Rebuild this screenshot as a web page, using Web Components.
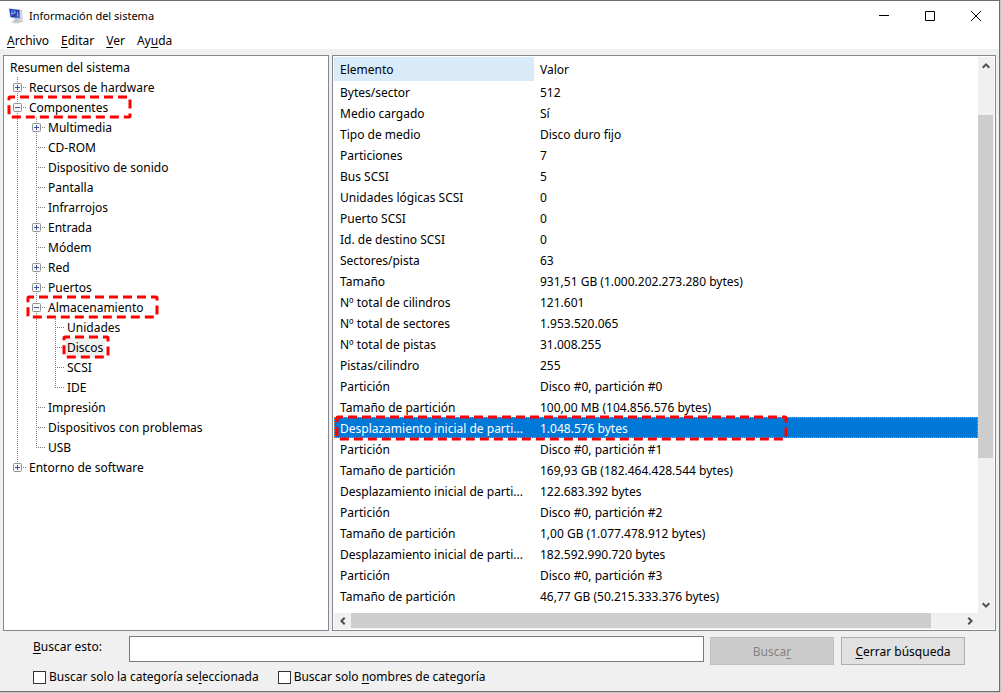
<!DOCTYPE html>
<html lang="es">
<head>
<meta charset="utf-8">
<title>Información del sistema</title>
<style>
html, body { height: 100%; margin: 0; }
body {
  box-sizing: border-box;
  padding: 0 1px 1px 0;
  background: #c6c6c6;
  font: 12px/20px "Noto Sans", "Open Sans", sans-serif;
  color: #000;
}
</style>
</head>
<body>
<system-info></system-info>

<template id="t-system-info">
  <style>
    :host { display: flex; flex-direction: column; box-sizing: border-box; height: 100%; background: #f0f0f0; border: solid #6e6e6e; border-width: 1px 1px 1px 0; }
    main { flex: 1; min-height: 0; display: grid; grid-template-columns: minmax(0, 326fr) minmax(0, 664fr); grid-template-rows: minmax(0, 1fr); gap: 3px; padding: 6px 3px 0; }
    .tree, detail-list { border: 1px solid #828790; background: #fff; min-height: 0; }
    .tree { padding: 1px 0 0 4px; overflow: hidden; }
  </style>
  <title-bar>Información del sistema</title-bar>
  <menu-bar></menu-bar>
  <main>
    <div class="tree" role="tree">
      <tree-item root label="Resumen del sistema">
        <tree-item label="Recursos de hardware" state="closed"></tree-item>
        <tree-item label="Componentes" state="open" mark style="--mark-width:125px"></tree-item>
        <tree-item label="Entorno de software" state="closed" last></tree-item>
      </tree-item>
    </div>
    <detail-list></detail-list>
  </main>
  <find-bar></find-bar>
</template>

<template id="t-title-bar">
  <style>
    :host { display: flex; align-items: center; height: 30px; background: #fff; padding-left: 8px; font-size: 11px; }
    .logo { width: 16px; height: 16px; margin-right: 5px; }
    .name { flex: 1; }
    button { width: 46px; height: 30px; padding: 0; border: 0; background: none; display: grid; place-items: center; }
  </style>
  <svg class="logo" viewBox="0 0 16 16">
    <defs><linearGradient id="g" x1="0" y1="0" x2="1" y2="1"><stop offset="0" stop-color="#1f45c8"/><stop offset=".55" stop-color="#2038a4"/><stop offset="1" stop-color="#6f9be6"/></linearGradient></defs>
    <ellipse cx="8.500" cy="13.700" rx="4.800" ry="1.800" fill="#d4d7dc"/>
    <path d="M6.500 10l4 1v3h-4z" fill="#b9bec8"/>
    <path d="M11.500 1.500l2.300.7.6 11.800-2.600-.8z" fill="#dcdfe6" stroke="#a9aebb" stroke-width=".5"/>
    <path d="M.6 0L12 1.400l.8 10L2 9.700z" fill="#cfd6e8"/>
    <path d="M1.200.7l10.300 1.200.7 8.900L2.600 9.100z" fill="url(#g)"/>
    <path d="M4 2.500v5M6 2.500l.5 3.500 1-3M9.300 3.500l.5 4.500M3 5.500h3" stroke="#8fb2f2" stroke-width=".9" fill="none"/>
  </svg>
  <span class="name"><slot></slot></span>
  <button aria-label="Minimizar"><svg width="10" height="10"><path d="M0 4.500h10" stroke="#000"/></svg></button>
  <button aria-label="Maximizar"><svg width="10" height="10"><path d="M.5.5h9v9h-9z" fill="none" stroke="#000"/></svg></button>
  <button aria-label="Cerrar"><svg width="10" height="10"><path d="M0 0l10 10M10 0L0 10" stroke="#000"/></svg></button>
</template>

<template id="t-menu-bar">
  <style>
    :host { display: flex; gap: 12px; background: #fff; padding: 0 7px; height: 18px; }
    button { font: inherit; line-height: 20px; border: 0; padding: 0; background: none; color: inherit; }
    u { text-underline-offset: 2px; }
  </style>
  <button><u>A</u>rchivo</button><button><u>E</u>ditar</button><button><u>V</u>er</button><button>Ay<u>u</u>da</button>
</template>

<template id="t-call-out">
  <style>
    :host { position: absolute; pointer-events: none; z-index: 2; }
    svg { display: block; width: 100%; height: 100%; overflow: visible; }
    rect { x: 2px; y: 2px; width: calc(100% - 4px); height: calc(100% - 4px); fill: none; stroke: #f00; stroke-width: 3; stroke-dasharray: 9 5; stroke-dashoffset: 4; }
  </style>
  <svg><rect rx="1"/></svg>
</template>

<template id="t-tree-item">
  <style>
    :host { --dots: #808080; display: grid; grid-template-columns: 19px minmax(0, 1fr); position: relative; }
    :host([root]) { grid-template-columns: minmax(0, 1fr); }
    :host([root]) .guide { display: none; }
    .guide { grid-row: 1 / 3; position: relative; }
    .guide::before { content: ""; position: absolute; left: 9px; top: 0; bottom: 0; width: 1px; background: repeating-linear-gradient(var(--dots) 0 1px, transparent 1px 2px); }
    :host([last]) .guide::before { bottom: auto; height: 11px; }
    .guide::after { content: ""; position: absolute; left: 9px; right: 1px; top: 10px; height: 1px; background: repeating-linear-gradient(90deg, var(--dots) 0 1px, transparent 1px 2px); }
    button { position: absolute; z-index: 1; left: 5px; top: 6px; width: 9px; height: 9px; padding: 0; border: 0; background: none; }
    svg { display: block; }
    .label { justify-self: start; height: 20px; line-height: 22px; padding: 0 2px; white-space: nowrap; }
    :host([selected]) .label { background: #f0f0f0; }
    .kids { grid-column: -2 / -1; }
    call-out { left: var(--mark-left, -1px); top: -2px; width: var(--mark-width, 100%); height: 24px; }
  </style>
  <div class="guide"></div>
  <span class="label" role="treeitem"></span>
  <div class="kids" role="group"><slot></slot></div>
</template>

<template id="t-scroll-track">
  <style>
    :host { display: flex; background: #f0f0f0; }
    :host([vertical]) { flex-direction: column; }
    button { flex: none; display: grid; place-items: center; width: 17px; height: 16px; padding: 0; border: 0; background: none; }
    :host([vertical]) button { width: 16px; height: 17px; }
    .before { flex: var(--before) 0 0; }
    .thumb { flex: var(--thumb) 0 0; background: #cdcdcd; }
    .after { flex: var(--after) 0 0; }
    :host([vertical]) .thumb { margin-right: 1px; }
    :host(:not([vertical])) .thumb { margin-bottom: 1px; }
    path { fill: none; stroke: #505050; stroke-width: 2; }
    :host([vertical]) .h, :host(:not([vertical])) .v { display: none; }
  </style>
  <button aria-label="Atrás">
    <svg class="v" width="8" height="8"><path d="M.7 5.700L4 2.400l3.300 3.300"/></svg>
    <svg class="h" width="8" height="8"><path d="M5.700.7L2.400 4l3.300 3.300"/></svg>
  </button>
  <div class="before"></div><div class="thumb"></div><div class="after"></div>
  <button aria-label="Adelante">
    <svg class="v" width="8" height="8"><path d="M.7 2.300L4 5.600l3.300-3.300"/></svg>
    <svg class="h" width="8" height="8"><path d="M2.300.7L5.600 4 2.300 7.300"/></svg>
  </button>
</template>

<template id="t-detail-list">
  <style>
    :host { display: grid; grid-template: minmax(0, 1fr) 16px / minmax(0, 1fr) 16px; padding: 1px; }
    .view { overflow: hidden; }
    table { width: 100%; table-layout: fixed; border-collapse: collapse; }
    col:first-child { width: 200px; }
    th, td { padding: 2px 6px 0; text-align: left; font-weight: normal; white-space: nowrap; line-height: 19px; position: relative; }
    th { line-height: 22px; }
    th:first-child { background: #d9ebf9; }
    tr.selected { background: #0078d7; color: #fff; outline: 1px dotted #ff8728; outline-offset: -1px; }
    call-out { left: 1px; top: -2px; width: 453px; height: 26px; }
    .corner { background: #f0f0f0; }
  </style>
  <div class="view">
    <table>
      <colgroup><col><col></colgroup>
      <thead><tr><th scope="col">Elemento</th><th scope="col">Valor</th></tr></thead>
      <tbody></tbody>
    </table>
  </div>
  <scroll-track vertical style="--before:41;--thumb:343;--after:138"></scroll-track>
  <scroll-track style="--before:0;--thumb:580;--after:30"></scroll-track>
  <div class="corner"></div>
</template>

<template id="t-find-bar">
  <style>
    :host { display: block; padding: 5px 34px 4px 33px; }
    .query { display: grid; grid-template-columns: 96px minmax(0, 1fr) 130px 131px; }
    .query label { line-height: 22px; }
    .query input { box-sizing: border-box; width: 100%; height: 26px; border: 1px solid #7a7a7a; background: #fff; padding: 0 4px; font: inherit; border-radius: 0; }
    button { height: 28px; margin: 1px 0 0 6px; padding: 1px 0 0; border: 1px solid #adadad; background: #e1e1e1; font: inherit; color: #000; }
    button:last-child { margin-left: 7px; }
    button:disabled { background: #ccc; border-color: #bfbfbf; color: #838383; }
    .options { display: flex; gap: 19px; margin-top: 2px; }
    .options label { display: flex; align-items: center; gap: 3px; white-space: nowrap; }
    .options input { appearance: none; box-sizing: border-box; width: 13px; height: 13px; margin: 0; border: 1px solid #333; background: #fff; }
    u { text-underline-offset: 2px; }
  </style>
  <div class="query">
    <label for="q"><u>B</u>uscar esto:</label>
    <input id="q" type="text">
    <button disabled>Busca<u>r</u></button>
    <button><u>C</u>errar búsqueda</button>
  </div>
  <div class="options">
    <label><input type="checkbox"><span>Buscar solo la categoría se<u>l</u>eccionada</span></label>
    <label><input type="checkbox"><span>Buscar solo <u>n</u>ombres de categoría</span></label>
  </div>
</template>

<template id="t-components">
  <tree-item label="Multimedia" state="closed"></tree-item>
  <tree-item label="CD-ROM"></tree-item>
  <tree-item label="Dispositivo de sonido"></tree-item>
  <tree-item label="Pantalla"></tree-item>
  <tree-item label="Infrarrojos"></tree-item>
  <tree-item label="Entrada" state="closed"></tree-item>
  <tree-item label="Módem"></tree-item>
  <tree-item label="Red" state="closed"></tree-item>
  <tree-item label="Puertos" state="closed"></tree-item>
  <tree-item label="Almacenamiento" state="open" mark style="--mark-width:133px">
    <tree-item label="Unidades"></tree-item>
    <tree-item label="Discos" selected mark style="--mark-left:16px;--mark-width:48px"></tree-item>
    <tree-item label="SCSI"></tree-item>
    <tree-item label="IDE" last></tree-item>
  </tree-item>
  <tree-item label="Impresión"></tree-item>
  <tree-item label="Dispositivos con problemas"></tree-item>
  <tree-item label="USB" last></tree-item>
</template>

<script>
class Base extends HTMLElement {
  constructor() {
    super();
    const t = document.getElementById('t-' + this.localName);
    this.attachShadow({ mode: 'open' }).append(t.content.cloneNode(true));
  }
}
class TreeItem extends Base {
  connectedCallback() {
    if (this.ready) return;
    this.ready = true;
    const root = this.shadowRoot, state = this.getAttribute('state');
    root.querySelector('.label').textContent = this.getAttribute('label');
    if (state) {
      const b = document.createElement('button');
      b.setAttribute('aria-label', state === 'open' ? 'Contraer' : 'Expandir');
      b.innerHTML = '<svg width="9" height="9"><rect x=".5" y=".5" width="8" height="8" rx="1" fill="#f6f6f6" stroke="#919191"/><path d="M2 4.500h5' +
        (state === 'open' ? '' : 'M4.500 2v5') + '" stroke="#3a55a0"/></svg>';
      root.querySelector('.guide').append(b);
    }
    if (this.hasAttribute('mark')) root.append(document.createElement('call-out'));
  }
}
class SystemInfo extends Base {
  connectedCallback() {
    const parent = this.shadowRoot.querySelector('[label="Componentes"]');
    parent.replaceChildren(document.getElementById('t-components').content.cloneNode(true));
  }
}
const ROWS = [
  ['Bytes/sector', '512'], ['Medio cargado', 'Sí'], ['Tipo de medio', 'Disco duro fijo'],
  ['Particiones', '7'], ['Bus SCSI', '5'], ['Unidades lógicas SCSI', '0'], ['Puerto SCSI', '0'],
  ['Id. de destino SCSI', '0'], ['Sectores/pista', '63'], ['Tamaño', '931,51 GB (1.000.202.273.280 bytes)'],
  ['Nº total de cilindros', '121.601'], ['Nº total de sectores', '1.953.520.065'],
  ['Nº total de pistas', '31.008.255'], ['Pistas/cilindro', '255'],
  ['Partición', 'Disco #0, partición #0'], ['Tamaño de partición', '100,00 MB (104.856.576 bytes)'],
  ['Desplazamiento inicial de parti...', '1.048.576 bytes', true],
  ['Partición', 'Disco #0, partición #1'], ['Tamaño de partición', '169,93 GB (182.464.428.544 bytes)'],
  ['Desplazamiento inicial de parti...', '122.683.392 bytes'],
  ['Partición', 'Disco #0, partición #2'], ['Tamaño de partición', '1,00 GB (1.077.478.912 bytes)'],
  ['Desplazamiento inicial de parti...', '182.592.990.720 bytes'],
  ['Partición', 'Disco #0, partición #3'], ['Tamaño de partición', '46,77 GB (50.215.333.376 bytes)']
];
class DetailList extends Base {
  connectedCallback() {
    const body = this.shadowRoot.querySelector('tbody');
    body.replaceChildren();
    for (const [name, value, selected] of ROWS) {
      const tr = body.insertRow();
      tr.insertCell().textContent = name;
      tr.insertCell().textContent = value;
      if (selected) {
        tr.className = 'selected';
        tr.cells[0].append(document.createElement('call-out'));
      }
    }
  }
}
customElements.define('call-out', class extends Base {});
customElements.define('scroll-track', class extends Base {});
customElements.define('tree-item', TreeItem);
customElements.define('detail-list', DetailList);
customElements.define('title-bar', class extends Base {});
customElements.define('menu-bar', class extends Base {});
customElements.define('find-bar', class extends Base {});
customElements.define('system-info', SystemInfo);
</script>
</body>
</html>
